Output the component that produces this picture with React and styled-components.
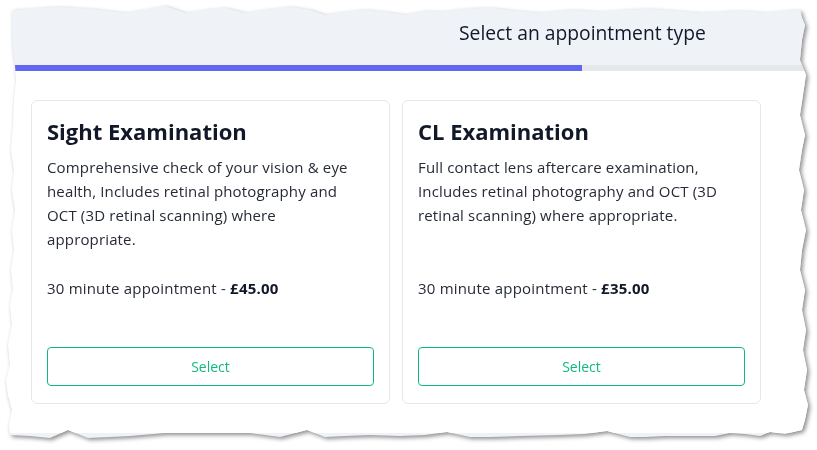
import React from "react";
import styled, { createGlobalStyle } from "styled-components";

const Global = createGlobalStyle`
  html, body { margin: 0; padding: 0; background: #ffffff; }
  body { font-family: "Open Sans", "Noto Sans", sans-serif; }
  * { box-sizing: border-box; }
`;

const torn = `polygon(
  12px 10px, 30px 9px, 57px 7px, 90px 9px, 125px 13px, 150px 9px, 165px 6px, 185px 13px,
  205px 10px, 225px 8px, 245px 13px, 265px 10px, 290px 7px, 310px 10px, 325px 15px, 345px 12px,
  365px 10px, 385px 12px, 405px 15px, 425px 11px, 440px 12px, 465px 9px, 490px 8px, 515px 11px,
  540px 13px, 570px 10px, 600px 12px, 625px 10px, 650px 9px, 675px 11px, 700px 13px, 720px 12px,
  740px 11px, 765px 13px, 785px 11px, 800px 10px,
  802px 18px, 805px 25px, 802px 40px, 800px 60px, 806px 75px, 803px 95px, 800px 115px, 805px 135px,
  802px 150px, 799px 170px, 804px 190px, 801px 210px, 806px 230px, 802px 250px, 800px 270px,
  805px 290px, 802px 310px, 806px 330px, 803px 350px, 807px 370px, 804px 390px, 808px 405px,
  805px 420px, 802px 430px,
  785px 434px, 770px 432px, 760px 436px, 745px 434px, 730px 433px, 715px 436px, 700px 436px,
  665px 436px, 645px 437px, 630px 437px, 607px 431px, 585px 434px, 560px 435px, 520px 436px,
  490px 437px, 470px 437px, 447px 432px, 425px 435px, 400px 436px, 370px 435px, 345px 436px,
  325px 437px, 307px 430px, 280px 437px, 250px 433px, 210px 433px, 165px 433px, 130px 436px,
  110px 437px, 88px 438px, 68px 430px, 50px 438px, 30px 436px, 10px 435px,
  9px 425px, 12px 410px, 8px 395px, 6px 380px, 10px 365px, 8px 345px, 12px 325px, 10px 305px,
  13px 290px, 11px 270px, 14px 250px, 12px 230px, 15px 210px, 12px 190px, 14px 170px,
  11px 150px, 13px 125px, 14px 100px, 16px 80px, 15px 65px, 13px 50px, 12px 30px
)`;

const Shadow = styled.div`
  width: 817px;
  height: 450px;
  filter: drop-shadow(2px 2px 2px rgba(0, 0, 0, 0.45));
`;

const Paper = styled.div`
  width: 817px;
  height: 450px;
  display: flex;
  flex-direction: column;
  background: #eff2f7;
  clip-path: ${torn};
`;

const Header = styled.header`
  height: 65px;
  flex: none;
  display: flex;
  align-items: center;
  padding: 0 0 0 459px;
  background: #eff2f7;
  font-size: 19.3px;
  color: #111827;
`;

const Progress = styled.div`
  height: 6px;
  flex: none;
  display: flex;
  background: #e5e7eb;
`;

const Fill = styled.div`
  background: #6366f1;
  height: 100%;
`;

const Main = styled.main`
  height: 362px;
  flex: none;
  background: #ffffff;
  padding: 29px 0 0 31px;
`;

const Cards = styled.div`
  display: grid;
  grid-template-columns: 359px 359px;
  column-gap: 12px;
`;

const Card = styled.section`
  height: 304px;
  border: 1px solid #e5e7eb;
  border-radius: 6px;
  padding: 16px 15px 17px 15px;
  display: flex;
  flex-direction: column;
  background: #fff;
`;

const Title = styled.h2`
  margin: 0;
  font-size: 22px;
  line-height: 28px;
  font-weight: 700;
  color: #111827;
`;

const Desc = styled.p`
  margin: 10px 0 0;
  font-size: 15px;
  letter-spacing: 0.15px;
  line-height: 24px;
  color: #262b36;
  min-height: 96px;
  white-space: nowrap;
`;

const Price = styled.p`
  margin: 25px 0 0;
  font-size: 15px;
  letter-spacing: 0.2px;
  line-height: 24px;
  color: #262b36;
  b { color: #111827; font-weight: 700; }
`;

const SelectButton = styled.button`
  margin-top: auto;
  height: 39px;
  width: 100%;
  padding: 0 0 1px;
  border: 1px solid #10b981;
  border-radius: 4px;
  background: #fff;
  color: #10b981;
  font-family: inherit;
  font-size: 14px;
  cursor: pointer;
`;

const items = [
  {
    title: "Sight Examination",
    lines: [
      "Comprehensive check of your vision & eye",
      "health, Includes retinal photography and",
      "OCT (3D retinal scanning) where",
      "appropriate.",
    ],
    price: "£45.00",
  },
  {
    title: "CL Examination",
    lines: [
      "Full contact lens aftercare examination,",
      "Includes retinal photography and OCT (3D",
      "retinal scanning) where appropriate.",
    ],
    price: "£35.00",
  },
];

export default function App() {
  return (
    <>
      <Global />
      <Shadow>
        <Paper>
          <Header>Select an appointment type</Header>
          <Progress>
            <Fill style={{ width: "582px" }} />
          </Progress>
          <Main>
            <Cards>
              {items.map((it) => (
                <Card key={it.title}>
                  <Title>{it.title}</Title>
                  <Desc>
                    {it.lines.map((l, i) => (
                      <React.Fragment key={i}>
                        {i > 0 && <br />}
                        {l}
                      </React.Fragment>
                    ))}
                  </Desc>
                  <Price>
                    30 minute appointment - <b>{it.price}</b>
                  </Price>
                  <SelectButton>Select</SelectButton>
                </Card>
              ))}
            </Cards>
          </Main>
        </Paper>
      </Shadow>
    </>
  );
}
